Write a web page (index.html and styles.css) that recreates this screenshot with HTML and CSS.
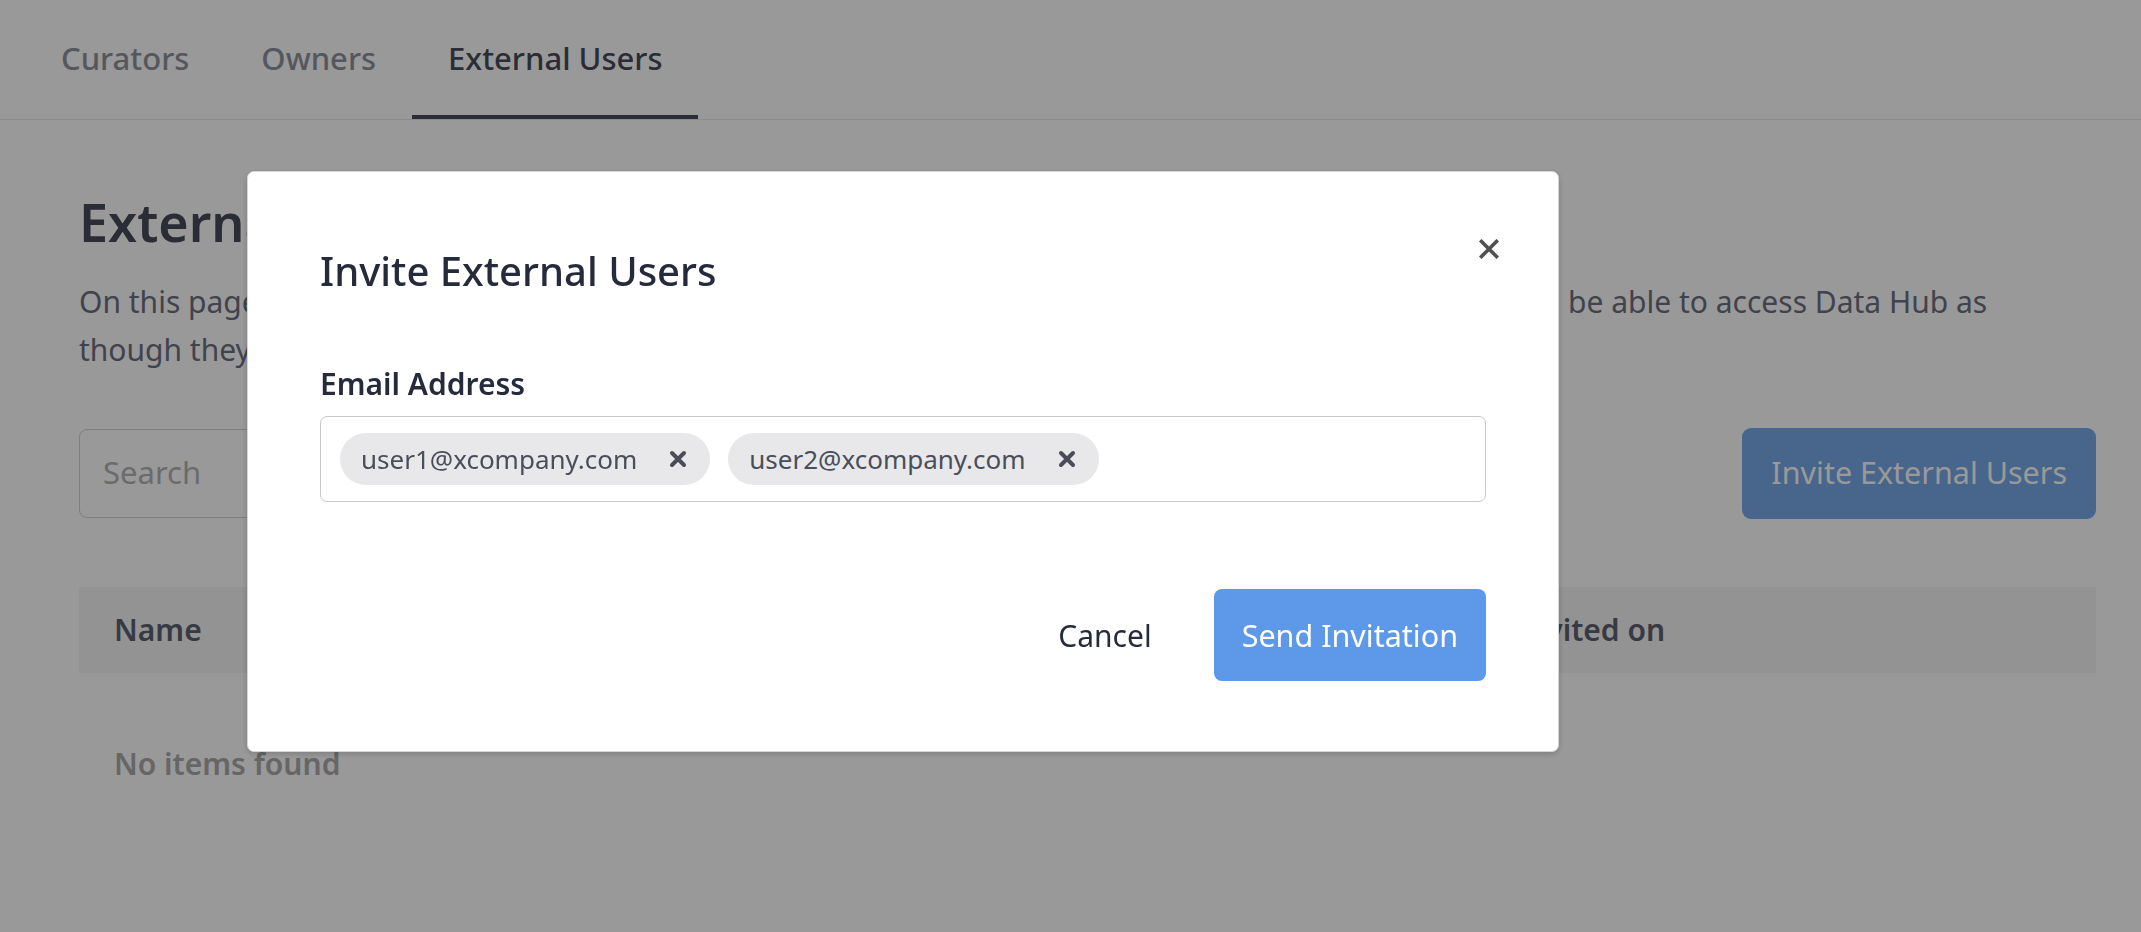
FILE: index.html
```html
<!DOCTYPE html>
<html lang="en">
<head>
<meta charset="utf-8">
<title>External Users</title>
<link rel="stylesheet" href="styles.css">
</head>
<body>
<div class="page">
  <nav class="tabs">
    <a class="tab">Curators</a>
    <a class="tab">Owners</a>
    <a class="tab tab-active">External Users</a>
  </nav>
  <main class="content">
    <h1 class="title">External Users</h1>
    <p class="desc">On this page you can invite users from outside the organisation. External users are not members, but will be able to access Data Hub as though they were.</p>
    <div class="toolbar">
      <div class="search">Search</div>
      <button class="btn-primary-page">Invite External Users</button>
    </div>
    <div class="table">
      <div class="thead">
        <div class="th">Name</div>
        <div class="th">Email</div>
        <div class="th">Invited on</div>
      </div>
      <div class="empty">No items found</div>
    </div>
  </main>
</div>

<div class="overlay">
  <div class="modal" role="dialog">
    <button class="modal-close" aria-label="Close">
      <svg width="20" height="20" viewBox="0 0 20 20"><path d="M2.5 2.5 L17.5 17.5 M17.5 2.5 L2.5 17.5" stroke="#4f4f52" stroke-width="3.6" stroke-linecap="square" fill="none"/></svg>
    </button>
    <h2 class="modal-title">Invite External Users</h2>
    <label class="field-label">Email Address</label>
    <div class="tag-input">
      <span class="chip">user1@xcompany.com
        <svg class="chip-x" width="18" height="18" viewBox="0 0 18 18"><path d="M3 3 L15 15 M15 3 L3 15" stroke="#4a4d59" stroke-width="4" stroke-linecap="round" fill="none"/></svg>
      </span>
      <span class="chip">user2@xcompany.com
        <svg class="chip-x" width="18" height="18" viewBox="0 0 18 18"><path d="M3 3 L15 15 M15 3 L3 15" stroke="#4a4d59" stroke-width="4" stroke-linecap="round" fill="none"/></svg>
      </span>
    </div>
    <div class="modal-footer">
      <button class="btn-link">Cancel</button>
      <button class="btn-primary">Send Invitation</button>
    </div>
  </div>
</div>
</body>
</html>
```

FILE: styles.css
```css
* { box-sizing: border-box; }

html, body {
  margin: 0;
  padding: 0;
  background: #ffffff;
  font-family: "Noto Sans", "Open Sans", sans-serif;
  width: 2141px;
  height: 932px;
  overflow: hidden;
}

.page { position: relative; }

.tabs {
  display: flex;
  padding-left: 25px;
  height: 120px;
  border-bottom: 1px solid #e8e8e8;
}

.tab {
  display: flex;
  align-items: center;
  height: 119px;
  padding: 0 36px;
  border-bottom: 4px solid transparent;
  font-size: 31px;
  font-weight: 500;
  color: #8e929d;
  line-height: 42px;
}

.tab-active {
  color: #474a5b;
  border-bottom-color: #474a5b;
}

.content {
  padding: 0 45px 0 79px;
}

.title {
  margin: 70px 0 0;
  font-size: 52px;
  line-height: 64px;
  font-weight: 600;
  color: #474a5a;
}

.desc {
  margin: 24px 0 0;
  font-size: 30px;
  line-height: 48px;
  color: #6b7180;
  max-width: 1960px;
}

.toolbar {
  margin-top: 54px;
  display: flex;
  justify-content: space-between;
  align-items: center;
}

.search {
  width: 640px;
  height: 89px;
  border: 1.5px solid #d2d2d2;
  border-radius: 8px;
  padding: 0 23px 4px;
  display: flex;
  align-items: center;
  font-size: 31px;
  color: #b3b3b3;
}

.btn-primary-page {
  height: 91px;
  padding: 0 29px 4px;
  border: none;
  border-radius: 9px;
  background: #78a8e9;
  color: #ffffff;
  font-family: inherit;
  font-size: 30.5px;
}

.table { margin-top: 68px; }

.thead {
  display: grid;
  grid-template-columns: 701px 701px 1fr;
  height: 86px;
  background: #f5f5f5;
  align-items: center;
}

.th {
  padding-left: 35px;
  font-size: 30px;
  line-height: 40px;
  font-weight: 600;
  color: #5d6271;
}

.empty {
  padding: 71px 35px;
  font-size: 30px;
  line-height: 40px;
  font-weight: 600;
  color: #aaaaaa;
}

/* Modal */
.overlay {
  position: fixed;
  inset: 0;
  background: rgba(0, 0, 0, 0.4);
}

.modal {
  position: absolute;
  left: 247px;
  top: 171px;
  width: 1312px;
  background: #ffffff;
  border: 1px solid #d6d6d6;
  border-radius: 7px;
  box-shadow: 0 2px 6px rgba(0, 0, 0, 0.18);
  padding: 71px 72px 70px;
}

.modal-close {
  position: absolute;
  top: 67px;
  right: 59px;
  width: 20px;
  height: 20px;
  padding: 0;
  border: none;
  background: none;
  display: block;
}
.modal-close svg { display: block; }

.modal-title {
  margin: 0;
  font-size: 40px;
  line-height: 56px;
  font-weight: 500;
  color: #262b3b;
}

.field-label {
  display: block;
  margin-top: 65px;
  font-size: 30px;
  line-height: 40px;
  font-weight: 600;
  color: #262b3b;
}

.tag-input {
  margin-top: 12px;
  border: 1.5px solid #c9c9cd;
  border-radius: 7px;
  padding: 15.5px 19px 16.5px;
  display: flex;
  gap: 18px;
  align-items: center;
}

.chip {
  display: inline-flex;
  align-items: center;
  height: 52px;
  padding: 0 23px 0 21px;
  background: #e8e8ea;
  border-radius: 26px;
  font-size: 26px;
  color: #4a4e5b;
  gap: 32px;
}

.chip-x { display: block; flex: none; }

.modal-footer {
  margin-top: 87px;
  display: flex;
  justify-content: flex-end;
  align-items: center;
  gap: 34px;
}

.btn-link {
  height: 92px;
  padding: 0 28px;
  border: none;
  background: none;
  font-family: inherit;
  font-size: 30px;
  color: #262b3b;
}

.btn-primary {
  height: 92px;
  padding: 0 28px;
  border: none;
  border-radius: 8px;
  background: #5e98e8;
  color: #ffffff;
  font-family: inherit;
  font-size: 30.5px;
}
```
